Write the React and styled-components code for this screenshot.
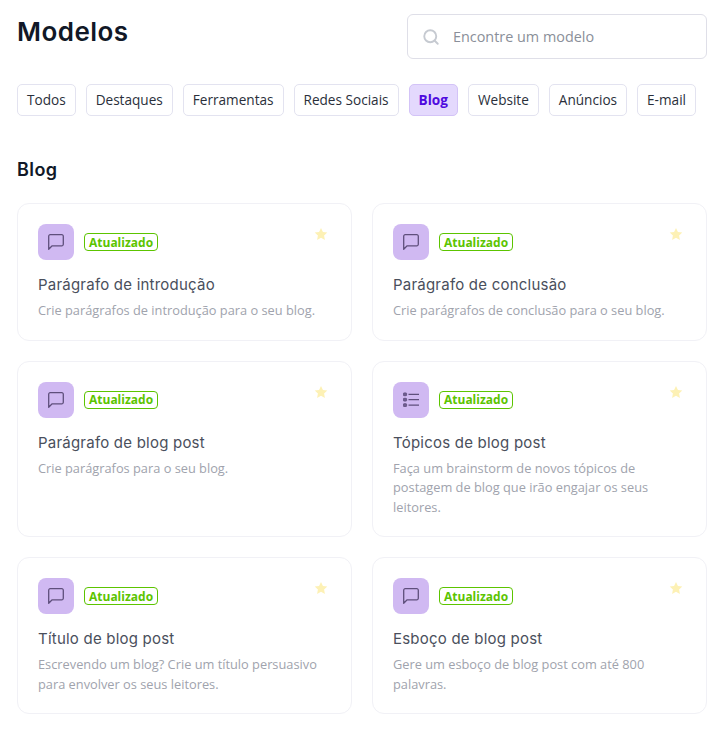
import React from 'react';
import styled, { createGlobalStyle } from 'styled-components';
import { Search } from 'lucide-react';

const GlobalStyle = createGlobalStyle`
  body {
    margin: 0;
    background: #fff;
    font-family: 'Open Sans', 'Liberation Sans', sans-serif;
  }
`;

const tabs = ['Todos', 'Destaques', 'Ferramentas', 'Redes Sociais', 'Blog', 'Website', 'Anúncios', 'E-mail'];

const models = [
  { title: 'Parágrafo de introdução', text: 'Crie parágrafos de introdução para o seu blog.' },
  { title: 'Parágrafo de conclusão', text: 'Crie parágrafos de conclusão para o seu blog.' },
  { title: 'Parágrafo de blog post', text: 'Crie parágrafos para o seu blog.' },
  { title: 'Tópicos de blog post', text: 'Faça um brainstorm de novos tópicos de postagem de blog que irão engajar os seus leitores.', list: true },
  { title: 'Título de blog post', text: 'Escrevendo um blog? Crie um título persuasivo para envolver os seus leitores.' },
  { title: 'Esboço de blog post', text: 'Gere um esboço de blog post com até 800 palavras.' },
];

function ChatIcon() {
  return (
    <svg width='16' height='16' viewBox='0 0 16 16' fill='none' stroke='#5f4f7c' strokeWidth='1.3' strokeLinejoin='round'>
      <path d='M2.2 0.7H13.8a1.5 1.5 0 0 1 1.5 1.5V10.3a1.5 1.5 0 0 1-1.5 1.5H4.2L0.7 15.2V2.2a1.5 1.5 0 0 1 1.5-1.5z' />
    </svg>
  );
}

function ListIcon() {
  return (
    <svg width='16' height='16' viewBox='0 0 16 16' fill='none'>
      <g fill='#6f5c92' stroke='#5f4f7c' strokeWidth='0.8'>
        <rect x='0.4' y='0.9' width='3.2' height='2.8' rx='0.6' />
        <rect x='0.4' y='6.3' width='3.2' height='2.8' rx='0.6' />
        <rect x='0.4' y='11.7' width='3.2' height='2.8' rx='0.6' />
      </g>
      <path d='M5.5 2.3H16M5.5 7.7H16M5.5 13.1H16' stroke='#5f4f7c' strokeWidth='1.3' />
    </svg>
  );
}

function StarIcon() {
  return (
    <svg width='14' height='14' viewBox='0 0 24 24' fill='#fdf1b5'>
      <path d='M12 1.5l3.3 6.9 7.5 1-5.5 5.2 1.4 7.5L12 18.4l-6.7 3.7 1.4-7.5L1.2 9.4l7.5-1z' />
    </svg>
  );
}

export default function App() {
  return (
    <Page>
      <GlobalStyle />
      <Header>
        <Title>Modelos</Title>
        <SearchBox>
          <Search size={18} color='#c6cad1' strokeWidth={2.5} />
          <SearchText>Encontre um modelo</SearchText>
        </SearchBox>
      </Header>
      <Tabs>
        {tabs.map((tab) => (
          <Tab key={tab} $active={tab === 'Blog'}>{tab}</Tab>
        ))}
      </Tabs>
      <Section>Blog</Section>
      <Grid>
        {models.map((model) => (
          <Card key={model.title}>
            <CardTop>
              <IconBox>{model.list ? <ListIcon /> : <ChatIcon />}</IconBox>
              <Badge>Atualizado</Badge>
              <Star><StarIcon /></Star>
            </CardTop>
            <CardTitle>{model.title}</CardTitle>
            <CardText>{model.text}</CardText>
          </Card>
        ))}
      </Grid>
    </Page>
  );
}

const Page = styled.div`
  width: 723px;
  box-sizing: border-box;
  padding: 14px 16px 14px 17px;
`;

const Header = styled.div`
  display: flex;
  justify-content: space-between;
  align-items: flex-start;
`;

const Title = styled.h1`
  margin: 0;
  font-family: Inter, sans-serif;
  font-size: 26px;
  line-height: 36px;
  font-weight: 600;
  letter-spacing: 0.45px;
  color: #111827;
`;

const SearchBox = styled.div`
  width: 300px;
  height: 45px;
  box-sizing: border-box;
  display: flex;
  align-items: center;
  gap: 13px;
  padding-left: 14px;
  border: 1px solid #dfdfe8;
  border-radius: 6px;
`;

const SearchText = styled.span`
  font-size: 14.4px;
  color: #8a8f99;
`;

const Tabs = styled.div`
  display: flex;
  gap: 10px;
  margin-top: 25px;
`;

const Tab = styled.div`
  height: 32px;
  box-sizing: border-box;
  padding: 0 9px 2px;
  display: flex;
  align-items: center;
  white-space: nowrap;
  font-size: 13.6px;
  font-weight: ${(p) => (p.$active ? 700 : 400)};
  color: ${(p) => (p.$active ? '#4f0adf' : '#2a2f3a')};
  background: ${(p) => (p.$active ? '#e4d9fd' : '#fff')};
  border: 1px solid ${(p) => (p.$active ? '#d3c3f7' : '#e3e3f0')};
  border-radius: 5px;
`;

const Section = styled.h2`
  margin: 41px 0 20px;
  font-family: Inter, sans-serif;
  font-size: 18px;
  line-height: 26px;
  font-weight: 600;
  letter-spacing: 0.4px;
  color: #111827;
`;

const Grid = styled.div`
  display: grid;
  grid-template-columns: 335px 335px;
  gap: 20px;
`;

const Card = styled.div`
  box-sizing: border-box;
  padding: 20px 20px 19px;
  border: 1px solid #f1f1f6;
  border-radius: 12px;
`;

const CardTop = styled.div`
  position: relative;
  display: flex;
  align-items: center;
  gap: 10px;
`;

const IconBox = styled.div`
  width: 36px;
  height: 36px;
  display: flex;
  align-items: center;
  justify-content: center;
  background: #d0b9f2;
  border-radius: 8px;
`;

const Badge = styled.span`
  height: 18px;
  box-sizing: border-box;
  padding: 0 4px;
  display: flex;
  align-items: center;
  font-size: 12px;
  font-weight: 700;
  color: #5cc400;
  border: 1px solid #5cc400;
  border-radius: 4px;
`;

const Star = styled.span`
  position: absolute;
  top: 3px;
  right: 3px;
  display: flex;
`;

const CardTitle = styled.div`
  margin-top: 13px;
  font-family: Inter, sans-serif;
  font-size: 15px;
  line-height: 24px;
  letter-spacing: 0.22px;
  color: #4a4f5c;
`;

const CardText = styled.div`
  margin-top: 4px;
  font-size: 12.8px;
  line-height: 19.5px;
  color: #a0a3ad;
`;
